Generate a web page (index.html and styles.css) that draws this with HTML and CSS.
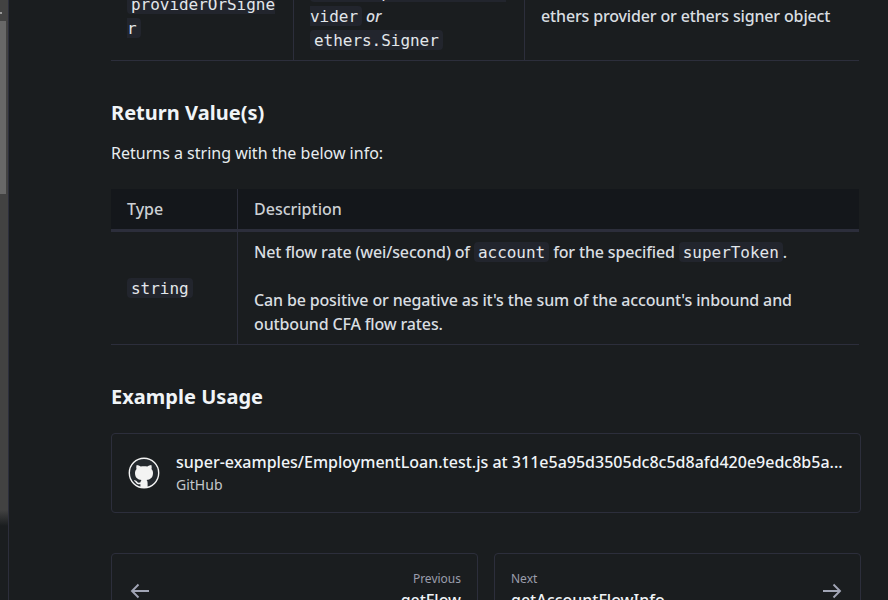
FILE: index.html
```html
<!DOCTYPE html>
<html lang="en">
<head>
<meta charset="utf-8">
<title>getNetFlow</title>
<link rel="stylesheet" href="styles.css">
</head>
<body>
<div class="page">
  <aside class="rail"><div class="track"><span class="tick"></span><div class="thumb"></div></div></aside>
  <main class="content">
    <div class="table params">
      <div class="cell"><p><code>providerOrSigner</code></p></div>
      <div class="cell"><p><code>ethers.providers.Provider</code> <em>or</em> <code class="whole">ethers.Signer</code></p></div>
      <div class="cell"><p>ethers provider or ethers signer object</p></div>
    </div>
    <h3 class="heading">Return Value(s)</h3>
    <p class="intro">Returns a string with the below info:</p>
    <div class="table returns">
      <div class="cell head">Type</div>
      <div class="cell head">Description</div>
      <div class="cell"><p><code>string</code></p></div>
      <div class="cell"><p>Net flow rate (wei/second) of <code>account</code> for the specified <code>superToken</code>.<br><br>Can be positive or negative as it's the sum of the account's inbound and outbound CFA flow rates.</p></div>
    </div>
    <h3 class="heading usage">Example Usage</h3>
    <a class="card">
      <svg class="logo" viewBox="0 0 32 32">
        <circle cx="16" cy="16" r="14.7" fill="#24292e" stroke="#f3f3f3" stroke-width="1.4"/>
        <path fill="#f3f3f3" d="M12.4 30.8v-3.6c-4.2.8-4.4-2.1-5.8-2.9-.7-.5-.8-.9-.2-1 2.5-.4 2.6 2.5 4.6 2.5.7 0 1.2-.2 1.5-.5.1-1 .4-1.7 1-2.2-3.9-.5-6.5-2.5-6.5-7.1 0-1.6.5-3 1.5-4.1-.3-1.1-.3-2.7.2-4 1.5 0 2.9.8 4 1.6 2.1-.5 4.5-.5 6.6 0 1.1-.8 2.5-1.6 4-1.6.5 1.3.5 2.9.2 4 1 1.1 1.5 2.5 1.5 4.1 0 4.6-2.6 6.6-6.5 7.1.8.7 1.1 1.7 1.1 3.2v4.5z"/>
      </svg>
      <div class="card-text">
        <div class="card-title">super-examples/EmploymentLoan.test.js at 311e5a95d3505dc8c5d8afd420e9edc8b5a...</div>
        <div class="card-sub">GitHub</div>
      </div>
    </a>
    <nav class="pager">
      <a class="step prev">
        <svg class="arrow" viewBox="0 0 20 16"><path d="M19 8H2M8.5 1.5 2 8l6.500 6.500"/></svg>
        <div><div class="step-label">Previous</div><div class="step-title">getFlow</div></div>
      </a>
      <a class="step next">
        <div><div class="step-label">Next</div><div class="step-title">getAccountFlowInfo</div></div>
        <svg class="arrow" viewBox="0 0 20 16"><path d="M1 8h17M11.500 1.500 18 8l-6.500 6.500"/></svg>
      </a>
    </nav>
  </main>
</div>
</body>
</html>
```
FILE: styles.css
```css
* { box-sizing: border-box; }
body {
  margin: 0;
  height: 600px;
  overflow: hidden;
  background: #1a1d1f;
  color: #e8edf0;
  font: 16px/24px "Noto Sans", sans-serif;
}
p, h3 { margin: 0; }
.page { display: flex; height: 600px; overflow: hidden; }
.rail { width: 9px; flex: none; border-right: 1px solid #2c2e3b; }
.track { width: 8px; height: 528px; background: linear-gradient(#424242 510px, #1a1d1f 526px); }
.tick { display: block; width: 2px; height: 21px; background: linear-gradient(#424242 12px, #999 12px, #999 14px, #424242 14px); }
.thumb { width: 6px; height: 173px; background: #686868; }
.content { width: 750px; margin-left: 102px; flex: none; }
.table { display: grid; width: 748px; }
.cell {
  display: flex;
  align-items: center;
  padding: 8px 16px;
  border-bottom: 1px solid #2c2e3b;
  border-right: 1px solid #2c2e3b;
  font-weight: 500;
  letter-spacing: -0.15px;
  color: #d9dee1;
}
.params { grid-template-columns: 183px 231px 334px; grid-template-rows: 89px; margin-top: -28px; }
.params .cell { padding-bottom: 9px; }
.params .cell:last-child { border-right: 0; }
.returns { grid-template-columns: 127px 621px; grid-template-rows: 43px 113px; margin-top: 24px; }
.returns .cell:nth-child(2n) { border-right: 0; }
.cell.head {
  background: #14171b;
  border-bottom: 3px solid #2c2e3b;
  letter-spacing: 0;
  color: #ccd0d4;
}
code {
  padding: 1px 4px 0;
  border-radius: 4px;
  background: #22252d;
  color: #e3e7eb;
  font: 400 16px/20px "DejaVu Sans Mono", monospace;
  letter-spacing: -0.033px;
  word-break: break-all;
}
.whole { white-space: nowrap; }
.heading { margin-top: 40px; font-size: 20px; line-height: 24px; font-weight: 700; letter-spacing: 0.03px; color: #f0f4f7; }
.intro { margin-top: 16px; }
.card {
  display: flex;
  align-items: center;
  gap: 16px;
  height: 80px;
  margin-top: 24px;
  padding: 0 16px;
  border: 1px solid #2c2e3b;
  border-radius: 4px;
}
.logo { width: 32px; height: 32px; flex: none; }
.card-text { min-width: 0; padding-bottom: 2px; white-space: nowrap; }
.card-title { font-weight: 500; color: #f0f4f7; }
.card-sub { font-size: 14px; line-height: 21px; color: #c3c7cb; }
.pager { display: grid; grid-template-columns: 1fr 1fr; gap: 16px; margin-top: 40px; }
.step {
  display: flex;
  align-items: center;
  justify-content: space-between;
  height: 76px;
  padding: 0 16px;
  border: 1px solid #2c2e3b;
  border-radius: 4px;
}
.prev { text-align: right; }
.step-label { font-size: 12px; line-height: 18px; color: #9a9eac; }
.step-title { font-weight: 500; color: #f0f4f7; }
.arrow { width: 20px; height: 16px; margin: 0 2px; fill: none; stroke: #a1a5b5; stroke-width: 1.9; }
```
